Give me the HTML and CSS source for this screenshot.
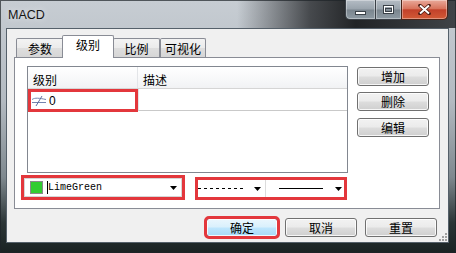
FILE: index.html
```html
<!DOCTYPE html>
<html>
<head>
<meta charset="utf-8">
<link rel="stylesheet" href="styles.css">
</head>
<body>
<div class="window">
  <div class="titlebar">
    <span class="title">MACD</span>
    <div class="caption">
      <div class="cbtn cmin"><svg width="11" height="4" viewBox="0 0 11 4"><rect x="0.5" y="0.5" width="10" height="3" fill="#fff" stroke="#3a4148" stroke-width="1"/></svg></div>
      <div class="cbtn cmax"><svg width="11" height="9" viewBox="0 0 11 9"><rect x="0.5" y="0.5" width="10" height="8" fill="none" stroke="#3a4148"/><rect x="1.5" y="1.5" width="8" height="6" fill="none" stroke="#fff"/><rect x="2.5" y="3.5" width="6" height="3" fill="none" stroke="#3a4148"/></svg></div>
      <div class="cbtn cclose"><svg width="13" height="11" viewBox="0 0 13 11"><path d="M2 1.5 L11 9.5 M11 1.5 L2 9.5" stroke="#4a1a10" stroke-width="3.6" stroke-linecap="round"/><path d="M2 1.5 L11 9.5 M11 1.5 L2 9.5" stroke="#fff" stroke-width="2"/></svg></div>
    </div>
  </div>
  <div class="client">
    <div class="tabs">
      <div class="tab t1">参数</div>
      <div class="tab active">级别</div>
      <div class="tab t3">比例</div>
      <div class="tab t4">可视化</div>
    </div>
    <div class="panel">
      <div class="top">
        <div class="list">
          <div class="lv-head">
            <div class="hcol h1">级别</div>
            <div class="hcol h2">描述</div>
          </div>
          <div class="lv-row">
            <div class="cell c1 mark">
              <svg class="neq" width="15" height="10" viewBox="0 0 15 10"><path d="M0 3.5 C3 1.5 7 2 14 3.5" fill="none" stroke="#7584ad" stroke-width="1"/><path d="M0 6.5 H14" stroke="#7584ad" stroke-width="1"/><path d="M10 0 L4 10" stroke="#5d6f9e" stroke-width="1"/></svg>
              <span class="val">0</span>
            </div>
            <div class="cell c2"></div>
          </div>
        </div>
        <div class="side">
          <div class="btn">增加</div>
          <div class="btn b2">删除</div>
          <div class="btn b3">编辑</div>
        </div>
      </div>
      <div class="combos">
        <div class="mark box1">
          <div class="combo color">
            <span class="swatch"></span>
            <span class="caret"></span>
            <span class="ctext">LimeGreen</span>
            <svg class="arrow" width="7" height="4" viewBox="0 0 7 4"><path d="M0 0 H7 L3.5 4 Z" fill="#000"/></svg>
          </div>
        </div>
        <div class="mark box2">
          <div class="combo dash">
            <svg class="sample" width="46" height="3" viewBox="0 0 46 3"><line x1="0" y1="1.5" x2="46" y2="1.5" stroke="#000" stroke-width="1" stroke-dasharray="3 3"/></svg>
            <svg class="arrow" width="7" height="4" viewBox="0 0 7 4"><path d="M0 0 H7 L3.5 4 Z" fill="#000"/></svg>
          </div>
          <div class="combo solid">
            <svg class="sample" width="44" height="3" viewBox="0 0 44 3"><line x1="0" y1="1.5" x2="44" y2="1.5" stroke="#000" stroke-width="1"/></svg>
            <svg class="arrow" width="7" height="4" viewBox="0 0 7 4"><path d="M0 0 H7 L3.5 4 Z" fill="#000"/></svg>
          </div>
        </div>
      </div>
    </div>
    <div class="footer">
      <div class="btn default mark-outline">确定</div>
      <div class="btn">取消</div>
      <div class="btn">重置</div>
    </div>
    <svg class="grip" width="8" height="8" viewBox="0 0 8 8"><g fill="#a0a0a0"><rect x="6" y="0" width="2" height="2"/><rect x="3" y="3" width="2" height="2"/><rect x="6" y="3" width="2" height="2"/><rect x="0" y="6" width="2" height="2"/><rect x="3" y="6" width="2" height="2"/><rect x="6" y="6" width="2" height="2"/></g></svg>
  </div>
</div>
</body>
</html>
```

FILE: styles.css
```css
html, body {
  margin: 0;
  padding: 0;
}
body {
  width: 456px;
  height: 253px;
  overflow: hidden;
  font-family: "Noto Sans CJK SC", "DejaVu Sans", sans-serif;
  font-size: 12px;
  color: #000;
}
.window {
  width: 456px;
  height: 253px;
  box-sizing: border-box;
  display: flex;
  flex-direction: column;
  background:
    linear-gradient(to right, rgba(0,0,0,0) 0%, rgba(0,0,0,0) 52%, rgba(28,30,33,0.75) 68%, rgba(20,22,24,0.92) 78%, rgba(40,44,48,0.85) 100%) top left / 100% 28px no-repeat,
    linear-gradient(to bottom, #c7cdd3 0%, #b3bac1 40%, #7f898f 70%, #2b3536 88%, #1a2222 100%);
  box-shadow: inset 0 0 0 1px rgba(30,35,40,0.7);
}
.titlebar {
  height: 28px;
  flex: none;
  display: flex;
  align-items: flex-start;
}
.title {
  font-family: "Liberation Sans", "DejaVu Sans", sans-serif;
  font-size: 12.5px;
  color: #151515;
  margin: 8px 0 0 8px;
  text-shadow: 0 0 6px rgba(255,255,255,0.7);
}
.caption {
  margin-left: auto;
  margin-right: 8px;
  display: flex;
  height: 20px;
}
.cbtn {
  height: 20px;
  box-sizing: border-box;
  border: 1px solid #3a4047;
  border-top: none;
  display: flex;
  align-items: center;
  justify-content: center;
  box-shadow: inset 0 0 0 1px rgba(255,255,255,0.35);
}
.cmin {
  width: 30px;
  border-bottom-left-radius: 5px;
  border-right: none;
  background: linear-gradient(to bottom, #b4bcc4 0%, #99a3ac 48%, #7a858e 52%, #8e9aa3 100%);
}
.cmin svg { margin-top: 6px; }
.cmax {
  width: 26px;
  border-right: none;
  background: linear-gradient(to bottom, #b4bcc4 0%, #99a3ac 48%, #7a858e 52%, #8e9aa3 100%);
}
.cclose {
  width: 47px;
  border-bottom-right-radius: 5px;
  border-color: #4a2418;
  background: linear-gradient(to bottom, #e9a99a 0%, #d8745d 45%, #c2412a 52%, #d25a36 100%);
}
.client {
  position: relative;
  flex: 1;
  margin: 0 7px 10px 6px;
  border: 1px solid #55606a;
  background: #f0f0f0;
  padding: 6px 8px 5px 7px;
  display: flex;
  flex-direction: column;
}
.tabs {
  height: 22px;
  display: flex;
  align-items: flex-end;
  padding-left: 2px;
  position: relative;
  z-index: 2;
}
.tab {
  height: 19px;
  box-sizing: border-box;
  width: 47px;
  border: 1px solid #898c95;
  border-bottom: none;
  border-radius: 2px 2px 0 0;
  background: linear-gradient(to bottom, #f3f3f3 0%, #ebebeb 50%, #dedede 51%, #d6d6d6 100%);
  display: flex;
  justify-content: center;
  align-items: center;
  line-height: 1;
  padding-top: 1px;
}
.tab.t1 { width: 48px; margin-right: -1px; }
.tab.t3 { width: 47px; margin-left: 1px; }
.tab.t4 { width: 46px; }
.tab.active {
  height: 23px;
  width: 52px;
  margin: 0 -2px -1px -1px;
  background: #fff;
  position: relative;
  z-index: 3;
  align-items: flex-start;
  padding-top: 3px;
}
.panel {
  height: 152px;
  box-sizing: border-box;
  border: 1px solid #898c95;
  background: #fff;
  padding: 8px 10px 8px 6px;
  display: flex;
  flex-direction: column;
}
.top {
  display: flex;
  padding-left: 6px;
}
.list {
  width: 321px;
  height: 107px;
  box-sizing: border-box;
  border: 1px solid #828790;
  background: #fff;
}
.lv-head {
  height: 22px;
  display: flex;
  background: linear-gradient(to bottom, #ffffff 0%, #f7f8f9 60%, #f1f2f4 100%);
  border-bottom: 1px solid #d5d5d5;
  box-sizing: border-box;
}
.hcol {
  display: flex;
  align-items: center;
  padding: 3px 0 0 5px;
  box-sizing: border-box;
}
.h1 {
  width: 110px;
  border-right: 1px solid #e3e5e8;
}
.h2 {
  flex: 1;
}
.lv-row {
  height: 23px;
  display: flex;
}
.cell {
  box-sizing: border-box;
  height: 23px;
}
.c1 {
  width: 110px;
  display: flex;
  align-items: center;
  padding-left: 1px;
}
.c2 {
  flex: 1;
  border-left: 1px solid #e3e5e8;
  border-bottom: 1px solid #c9c9c9;
  height: 22px;
}
.mark {
  border: 3px solid #e3373c;
}
.neq {
  margin-right: 2px;
}
.val {
  font-family: "Liberation Sans", "DejaVu Sans", sans-serif;
  font-size: 12px;
}
.side {
  margin-left: 9px;
  padding-top: 1px;
  display: flex;
  flex-direction: column;
}
.btn {
  width: 72px;
  height: 19px;
  box-sizing: border-box;
  border: 1px solid #707070;
  border-radius: 3px;
  background: linear-gradient(to bottom, #f2f2f2 0%, #ebebeb 48%, #dddddd 52%, #cfcfcf 100%);
  box-shadow: inset 0 0 0 1px rgba(255,255,255,0.8);
  display: flex;
  align-items: center;
  justify-content: center;
  line-height: 1;
}
.side .b2 { margin-top: 6px; }
.side .b3 { margin-top: 7px; }
.combos {
  margin-top: 2px;
  display: flex;
  align-items: flex-end;
}
.box1 {
  width: 164px;
  height: 25px;
  box-sizing: border-box;
}
.combo {
  box-sizing: border-box;
  height: 100%;
  display: flex;
  align-items: center;
  background: #fff;
}
.color {
  border: 1px solid #d6d6d6;
  padding-left: 5px;
}
.swatch {
  width: 11px;
  height: 11px;
  background: #32cd32;
  border: 1px solid #8a8a8a;
  flex: none;
}
.caret {
  width: 1px;
  height: 13px;
  background: #000;
  margin-left: 4px;
}
.ctext {
  font-family: "Liberation Mono", "DejaVu Sans Mono", monospace;
  font-size: 10px;
  margin-left: 0;
}
.color .arrow {
  margin-left: auto;
  margin-right: 4px;
}
.box2 {
  margin-left: 10px;
  width: 152px;
  height: 23px;
  box-sizing: border-box;
  display: flex;
}
.dash {
  width: 68px;
  border-right: 1px solid #dcdcdc;
  padding-left: 0;
}
.dash .arrow {
  margin-left: 10px;
}
.solid {
  flex: 1;
  padding-left: 13px;
}
.solid .arrow {
  margin-left: 12px;
}
.footer {
  margin-top: 9px;
  display: flex;
  justify-content: flex-end;
  padding-right: 3px;
}
.footer .btn + .btn {
  margin-left: 7px;
}
.footer .btn:last-child {
  margin-left: 8px;
}
.btn.default {
  border-color: #3c7fb1;
  background: linear-gradient(to bottom, #eaf6fd 0%, #d9f0fc 48%, #bee6fd 52%, #a7d9f5 100%);
}
.mark-outline {
  outline: 3px solid #e3373c;
  outline-offset: -1px;
}
.grip {
  position: absolute;
  right: 1px;
  bottom: 1px;
}
```
